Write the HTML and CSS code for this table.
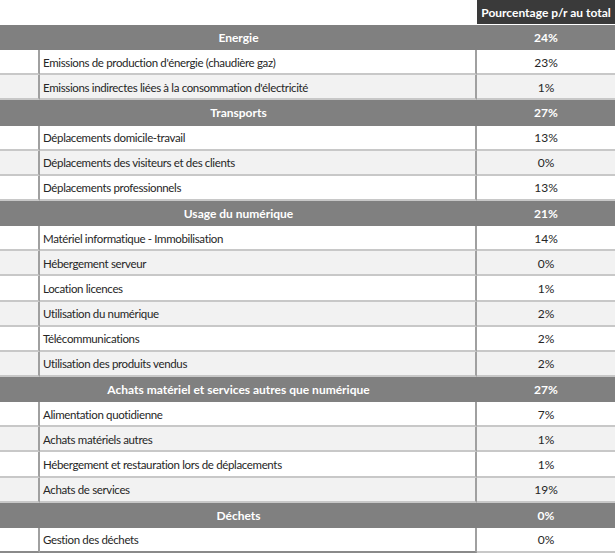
FILE: index.html
```html
<!DOCTYPE html>
<html lang="fr">
<head>
<meta charset="utf-8">
<title>Répartition des émissions</title>
<link rel="stylesheet" href="styles.css">
</head>
<body>
<table class="report">
  <colgroup>
    <col class="c-pad">
    <col class="c-label">
    <col class="c-pct">
  </colgroup>
  <thead>
    <tr class="head-row">
      <th class="blank" colspan="2"></th>
      <th class="head">Pourcentage p/r au total</th>
    </tr>
  </thead>
  <tbody>
    <tr class="cat"><td colspan="2">Energie</td><td>24%</td></tr>
    <tr class="item"><td class="pad"></td><td class="label">Emissions de production d'énergie (chaudière gaz)</td><td class="pct">23%</td></tr>
    <tr class="item alt"><td class="pad"></td><td class="label">Emissions indirectes liées à la consommation d'électricité</td><td class="pct">1%</td></tr>

    <tr class="cat"><td colspan="2">Transports</td><td>27%</td></tr>
    <tr class="item"><td class="pad"></td><td class="label">Déplacements domicile-travail</td><td class="pct">13%</td></tr>
    <tr class="item alt"><td class="pad"></td><td class="label">Déplacements des visiteurs et des clients</td><td class="pct">0%</td></tr>
    <tr class="item"><td class="pad"></td><td class="label">Déplacements professionnels</td><td class="pct">13%</td></tr>

    <tr class="cat"><td colspan="2">Usage du numérique</td><td>21%</td></tr>
    <tr class="item"><td class="pad"></td><td class="label">Matériel informatique - Immobilisation</td><td class="pct">14%</td></tr>
    <tr class="item alt"><td class="pad"></td><td class="label">Hébergement serveur</td><td class="pct">0%</td></tr>
    <tr class="item"><td class="pad"></td><td class="label">Location licences</td><td class="pct">1%</td></tr>
    <tr class="item alt"><td class="pad"></td><td class="label">Utilisation du numérique</td><td class="pct">2%</td></tr>
    <tr class="item"><td class="pad"></td><td class="label">Télécommunications</td><td class="pct">2%</td></tr>
    <tr class="item alt"><td class="pad"></td><td class="label">Utilisation des produits vendus</td><td class="pct">2%</td></tr>

    <tr class="cat"><td colspan="2">Achats matériel et services autres que numérique</td><td>27%</td></tr>
    <tr class="item"><td class="pad"></td><td class="label">Alimentation quotidienne</td><td class="pct">7%</td></tr>
    <tr class="item alt"><td class="pad"></td><td class="label">Achats matériels autres</td><td class="pct">1%</td></tr>
    <tr class="item"><td class="pad"></td><td class="label">Hébergement et restauration lors de déplacements</td><td class="pct">1%</td></tr>
    <tr class="item alt"><td class="pad"></td><td class="label">Achats de services</td><td class="pct">19%</td></tr>

    <tr class="cat"><td colspan="2">Déchets</td><td>0%</td></tr>
    <tr class="item last"><td class="pad"></td><td class="label">Gestion des déchets</td><td class="pct">0%</td></tr>
  </tbody>
</table>
</body>
</html>
```
FILE: styles.css
```css
html, body {
  margin: 0;
  padding: 0;
  background: #ffffff;
}

body {
  font-family: Lato, "Open Sans", "Liberation Sans", sans-serif;
  font-size: 12px;
  color: #262626;
}

.report {
  width: 615px;
  table-layout: fixed;
  border-collapse: separate;
  border-spacing: 0;
}

.c-pad { width: 40px; }
.c-label { width: 437px; }
.c-pct { width: 138px; }

.report th,
.report td {
  padding: 0;
  box-sizing: border-box;
  white-space: nowrap;
  vertical-align: middle;
}

.head-row th {
  height: 25px;
  border-bottom: 1px solid #ffffff;
}

.head {
  background: #3a3a3a;
  color: #ffffff;
  font-weight: 700;
  text-align: center;
}

.cat td {
  height: 25.15px;
  background: #808080;
  color: #ffffff;
  font-weight: 700;
  text-align: center;
}

.item td {
  height: 25.15px;
  background: #ffffff;
  border-bottom: 2px solid #c8c8c8;
}

.item.alt td {
  background: #f2f2f2;
}

.item .pad {
  border-right: 2px solid #a0a0a0;
}

.item .label {
  padding-left: 3px;
  padding-top: 1px;
  font-size: 11.5px;
  letter-spacing: -0.35px;
  border-right: 2px solid #a0a0a0;
}

.item .pct {
  padding-top: 1px;
  text-align: center;
}

.item.last .pad,
.item.last .label {
  border-bottom-color: #8a8a8a;
}
```
